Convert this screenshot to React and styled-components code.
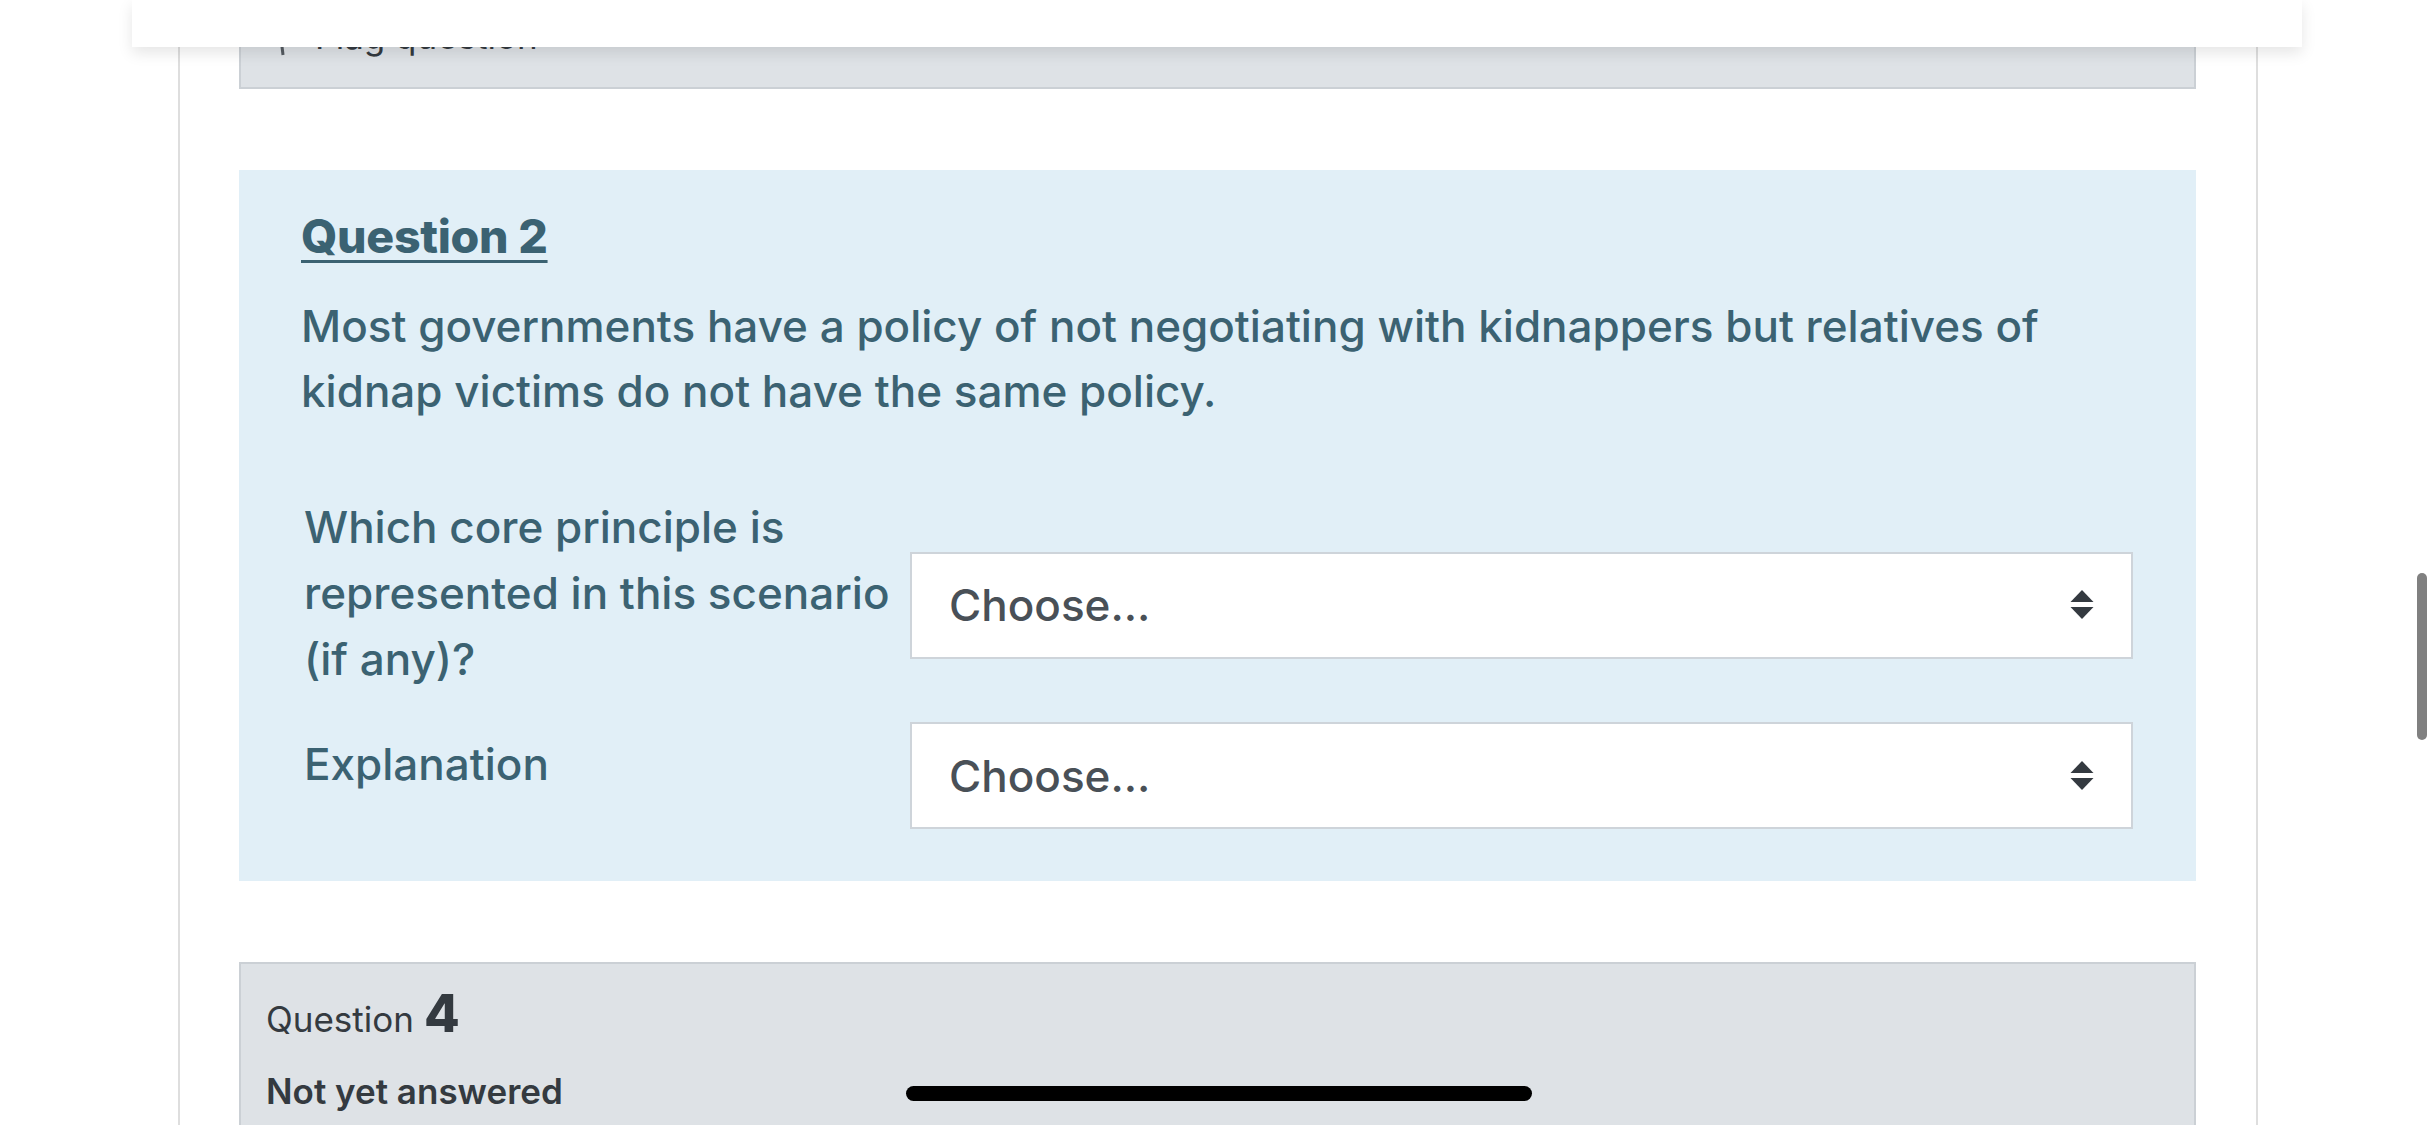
import React from 'react'
import styled, { createGlobalStyle } from 'styled-components'

const GlobalStyle = createGlobalStyle`
  html, body {
    margin: 0;
    padding: 0;
    background: #fff;
    font-family: Inter, "Noto Sans", "Liberation Sans", sans-serif;
    overflow: hidden;
  }
`

const Screen = styled.div`
  width: 2436px;
  height: 1125px;
  overflow: hidden;
  position: relative;
  background: #fff;
`

const TopBar = styled.div`
  position: absolute;
  top: 0;
  left: 132px;
  width: 2170px;
  height: 47px;
  background: #fff;
  box-shadow: 0 6px 14px rgba(0, 0, 0, 0.1);
  z-index: 5;
`

const Course = styled.div`
  margin: -28px 0 0 178px;
  width: 2080px;
  box-sizing: border-box;
  border-left: 2px solid #dedede;
  border-right: 2px solid #dedede;
  padding: 0 60px 0 59px;
  display: flex;
  flex-direction: column;
  gap: 81px;
`

const InfoBox = styled.div`
  background: #dee2e6;
  border: 2px solid #cbd0d5;
  padding: ${p => p.$tail ? '40px 30px 28px 32px' : '24px 25px 0 25px'};
  color: #343a40;
  min-height: ${p => p.$tail ? '0' : '300px'};
`

const FlagLine = styled.div`
  display: flex;
  align-items: center;
  gap: 18px;
  font-size: 35px;
  line-height: 45px;
  color: #343a40;
`

const QNo = styled.div`
  font-size: 35px;
  line-height: 52px;
  display: flex;
  align-items: baseline;
  gap: 10px;
  b {
    font-size: 52px;
    font-weight: 800;
  }
`

const State = styled.div`
  margin-top: 24px;
  font-size: 35px;
  font-weight: 600;
  line-height: 44px;
`

const Formulation = styled.div`
  background: #e1eff7;
  color: #3b6272;
  padding: 38px 63px 52px 62px;
`

const Heading = styled.h3`
  margin: 0;
  font-size: 46.5px;
  font-weight: 800;
  line-height: 56px;
  text-decoration: underline;
  text-decoration-thickness: 3px;
  text-underline-offset: 7px;
  letter-spacing: -0.3px;
`

const QText = styled.p`
  margin: 30px 0 0;
  font-size: 44px;
  font-weight: 500;
  line-height: 65px;
`

const Answers = styled.div`
  margin-top: 70px;
  display: grid;
  grid-template-columns: 590px 1fr;
  column-gap: 19px;
  row-gap: 6px;
  align-items: center;
`

const Label = styled.div`
  padding-left: 3px;
  padding-bottom: 24px;
  font-size: 44px;
  font-weight: 500;
  line-height: 66px;
`

const Select = styled.div`
  height: 107px;
  box-sizing: border-box;
  background: #fff;
  border: 2px solid #ced4da;
  display: flex;
  align-items: center;
  justify-content: space-between;
  padding: 0 37px 0 37px;
  color: #495057;
  font-size: 44px;
  font-weight: 500;
`

const Arrows = () => (
  <svg width="24" height="30" viewBox="0 0 24 30">
    <polygon points="12,0 23.5,12 0.5,12" fill="#343a40" />
    <polygon points="0.5,17 23.5,17 12,29" fill="#343a40" />
  </svg>
)

const Flag = () => (
  <svg width="24" height="40" viewBox="0 0 24 40">
    <path d="M6 4 L10 38" stroke="#555b61" strokeWidth="3" fill="none" />
  </svg>
)

const HomeBar = styled.div`
  position: absolute;
  left: 906px;
  top: 1086px;
  width: 626px;
  height: 15px;
  border-radius: 8px;
  background: #000;
  z-index: 6;
`

const ScrollThumb = styled.div`
  position: absolute;
  left: 2417px;
  top: 573px;
  width: 10px;
  height: 167px;
  border-radius: 5px;
  background: #808080;
  z-index: 6;
`

const rows = [
  'Which core principle is represented in this scenario (if any)?',
  'Explanation',
]

export default function App() {
  return (
    <Screen>
      <GlobalStyle />
      <TopBar />
      <Course>
        <InfoBox $tail>
          <FlagLine>
            <Flag />
            <span>Flag question</span>
          </FlagLine>
        </InfoBox>

        <Formulation>
          <Heading>Question 2</Heading>
          <QText>
            Most governments have a policy of not negotiating with kidnappers but relatives of kidnap victims do not have the same policy.
          </QText>
          <Answers>
            {rows.map(r => (
              <React.Fragment key={r}>
                <Label>{r}</Label>
                <Select role="combobox">
                  <span>Choose...</span>
                  <Arrows />
                </Select>
              </React.Fragment>
            ))}
          </Answers>
        </Formulation>

        <InfoBox>
          <QNo>Question <b>4</b></QNo>
          <State>Not yet answered</State>
        </InfoBox>
      </Course>
      <HomeBar />
      <ScrollThumb />
    </Screen>
  )
}
